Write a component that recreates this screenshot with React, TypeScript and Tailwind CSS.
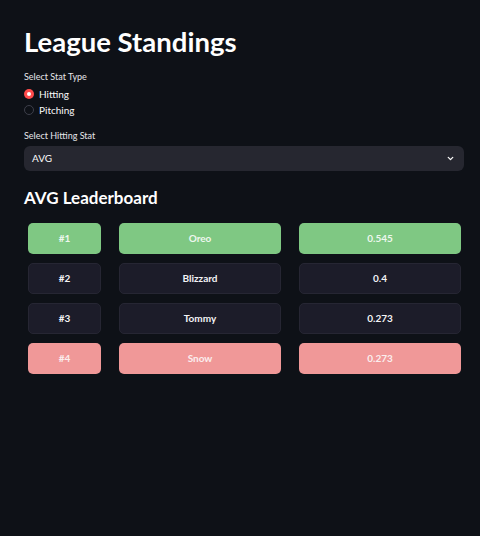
import React from "react";

const rows = [
  { rank: "#1", name: "Oreo", val: "0.545", kind: "top" },
  { rank: "#2", name: "Blizzard", val: "0.4", kind: "mid" },
  { rank: "#3", name: "Tommy", val: "0.273", kind: "mid" },
  { rank: "#4", name: "Snow", val: "0.273", kind: "bot" },
];

function cellCls(kind: string) {
  if (kind === "top") return "bg-[#7fc883] text-[#eef7ee] border-transparent";
  if (kind === "bot") return "bg-[#f09898] text-[#fbeeee] border-transparent";
  return "bg-[#1c1c29] text-[#f3f3f5] border-[#262633]";
}

export default function App() {
  return (
    <div
      className="w-[480px] h-[536px] bg-[#0e1117] text-[#fafafa] pl-[24px] pr-[16px] pt-[25px]"
      style={{ fontFamily: "Lato, 'Noto Sans', sans-serif" }}
    >
      <h1 className="text-[27.5px] font-bold leading-[34px] text-white">League Standings</h1>
      <div className="mt-[12px] text-[9px] leading-[12px] text-[#e6e6ea]">Select Stat Type</div>
      <div className="mt-[5px] flex flex-col gap-[4px]">
        <div className="flex items-center gap-[5px] h-[12px]">
          <span className="w-[10px] h-[10px] rounded-full bg-[#ff4b4b] flex items-center justify-center">
            <span className="w-[4px] h-[4px] rounded-full bg-white" />
          </span>
          <span className="text-[10px] text-[#fafafa]">Hitting</span>
        </div>
        <div className="flex items-center gap-[5px] h-[12px]">
          <span className="w-[10px] h-[10px] rounded-full border border-[#3d3f4a]" />
          <span className="text-[10px] text-[#fafafa]">Pitching</span>
        </div>
      </div>
      <div className="mt-[14px] text-[9px] leading-[12px] text-[#e6e6ea]">Select Hitting Stat</div>
      <div className="mt-[4px] h-[25px] rounded-[6px] bg-[#262730] flex items-center justify-between pl-[8px] pr-[9px]">
        <span className="text-[10px]">AVG</span>
        <svg width="9" height="9" viewBox="0 0 24 24" fill="none" stroke="#fafafa" strokeWidth="3.5" strokeLinecap="round" strokeLinejoin="round">
          <path d="M6 9l6 6 6-6" />
        </svg>
      </div>
      <h2 className="mt-[16px] text-[17px] font-bold leading-[22px] text-white">AVG Leaderboard</h2>
      <div className="mt-[14px] flex flex-col gap-[9px] pl-[4px] pr-[3px]">
        {rows.map((r) => (
          <div key={r.rank} className="flex gap-[18px] text-[10px] font-bold">
            <div className={`w-[73px] h-[31px] rounded-[5px] border flex items-center justify-center ${cellCls(r.kind)}`}>{r.rank}</div>
            <div className={`w-[162px] h-[31px] rounded-[5px] border flex items-center justify-center ${cellCls(r.kind)}`}>{r.name}</div>
            <div className={`flex-1 h-[31px] rounded-[5px] border flex items-center justify-center ${cellCls(r.kind)}`}>{r.val}</div>
          </div>
        ))}
      </div>
    </div>
  );
}
